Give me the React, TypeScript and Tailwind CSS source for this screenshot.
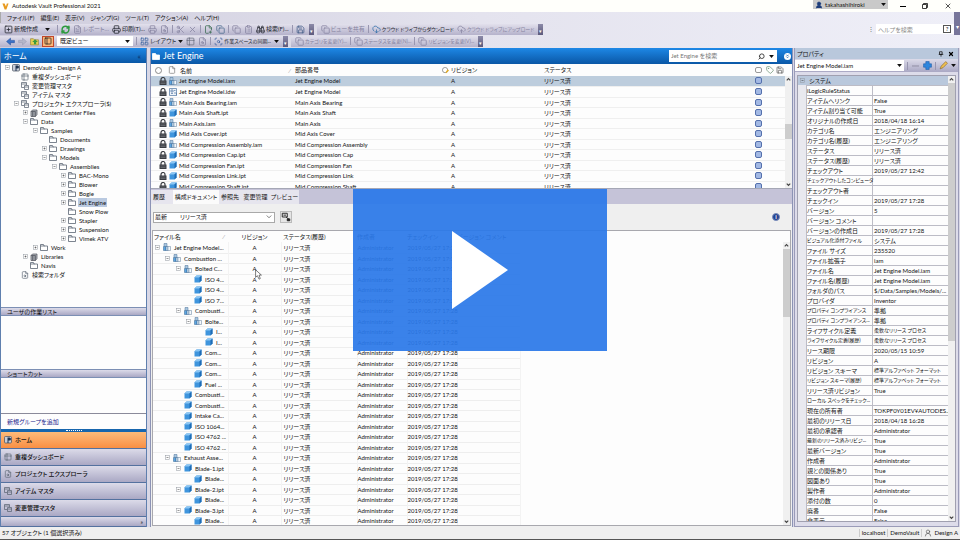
import { ReactNode } from "react";
import { RefreshCw, Printer, FilePlus2, Binoculars, PanelLeft, LayoutGrid, Copy, Scissors, X, CloudDownload, CloudUpload, File, FileText, ClipboardList, FileSearch, Table2, UserRound, ScanSearch, Search, Tag, SquarePlus, Save } from "lucide-react";

type Node = { label: string; depth: number; icon: string; open?: "+" | "-" };

const folders: Node[] = [
  { label: "DemoVault - Design A", depth: 0, icon: "vault", open: "-" },
  { label: "重複ダッシュボード", depth: 1, icon: "table" },
  { label: "変更管理マスタ", depth: 1, icon: "copy" },
  { label: "アイテム マスタ", depth: 1, icon: "copy" },
  { label: "プロジェクト エクスプローラ($)", depth: 1, icon: "copy", open: "-" },
  { label: "Content Center Files", depth: 2, icon: "lib", open: "+" },
  { label: "Data", depth: 2, icon: "folder", open: "-" },
  { label: "Samples", depth: 3, icon: "folder", open: "-" },
  { label: "Documents", depth: 4, icon: "folder" },
  { label: "Drawings", depth: 4, icon: "folder", open: "+" },
  { label: "Models", depth: 4, icon: "folder", open: "-" },
  { label: "Assemblies", depth: 5, icon: "folder", open: "-" },
  { label: "BAC-Mono", depth: 6, icon: "folder", open: "+" },
  { label: "Blower", depth: 6, icon: "folder", open: "+" },
  { label: "Bogie", depth: 6, icon: "folder", open: "+" },
  { label: "Jet Engine", depth: 6, icon: "folder", open: "+" },
  { label: "Snow Plow", depth: 6, icon: "folder" },
  { label: "Stapler", depth: 6, icon: "folder", open: "+" },
  { label: "Suspension", depth: 6, icon: "folder", open: "+" },
  { label: "Vimek ATV", depth: 6, icon: "folder", open: "+" },
  { label: "Work", depth: 3, icon: "folder", open: "+" },
  { label: "Libraries", depth: 2, icon: "lib", open: "+" },
  { label: "Navis", depth: 2, icon: "folder" },
  { label: "検索フォルダ", depth: 1, icon: "search" },
];

const files = [
  ["Jet Engine Model.iam", "Jet Engine Model"],
  ["Jet Engine Model.idw", "Jet Engine Model"],
  ["Main Axis Bearing.iam", "Main Axis Bearing"],
  ["Main Axis Shaft.ipt", "Main Axis Shaft"],
  ["Main Axis.iam", "Main Axis"],
  ["Mid Axis Cover.ipt", "Mid Axis Cover"],
  ["Mid Compression Assembly.iam", "Mid Compression Assembly"],
  ["Mid Compression Cap.ipt", "Mid Compression Cap"],
  ["Mid Compression Fan.ipt", "Mid Compression Fan"],
  ["Mid Compression Link.ipt", "Mid Compression Link"],
  ["Mid Compression Shaft.ipt", "Mid Compression Shaft"],
];

const parts: Node[] = [
  { label: "Jet Engine Model...", depth: 0, icon: "iam", open: "-" },
  { label: "Combustion ...", depth: 1, icon: "iam", open: "-" },
  { label: "Bolted C...", depth: 2, icon: "iam", open: "-" },
  { label: "ISO 4...", depth: 3, icon: "ipt" },
  { label: "ISO 4...", depth: 3, icon: "ipt" },
  { label: "ISO 7...", depth: 3, icon: "ipt" },
  { label: "Combusti...", depth: 2, icon: "iam", open: "-" },
  { label: "Bolte...", depth: 3, icon: "iam", open: "-" },
  { label: "I...", depth: 4, icon: "ipt" },
  { label: "I...", depth: 4, icon: "ipt" },
  { label: "Com...", depth: 3, icon: "ipt" },
  { label: "Com...", depth: 3, icon: "ipt" },
  { label: "Com...", depth: 3, icon: "ipt" },
  { label: "Fuel ...", depth: 3, icon: "ipt" },
  { label: "Combusti...", depth: 2, icon: "ipt" },
  { label: "Combusti...", depth: 2, icon: "ipt" },
  { label: "Intake Ca...", depth: 2, icon: "ipt" },
  { label: "ISO 1064...", depth: 2, icon: "ipt" },
  { label: "ISO 4762 ...", depth: 2, icon: "ipt" },
  { label: "ISO 4762 ...", depth: 2, icon: "ipt" },
  { label: "Exhaust Asse...", depth: 1, icon: "iam", open: "-" },
  { label: "Blade-1.ipt", depth: 2, icon: "ipt", open: "-" },
  { label: "Blade...", depth: 3, icon: "ipt" },
  { label: "Blade-2.ipt", depth: 2, icon: "ipt", open: "-" },
  { label: "Blade...", depth: 3, icon: "ipt" },
  { label: "Blade-3.ipt", depth: 2, icon: "ipt", open: "-" },
  { label: "Blade...", depth: 3, icon: "ipt" },
];

const properties = [
  ["iLogicRuleStatus", ""],
  ["アイテムへリンク", "False"],
  ["アイテム割り当て可能", "True"],
  ["オリジナルの作成日", "2018/04/18 16:14"],
  ["カテゴリ名", "エンジニアリング"],
  ["カテゴリ名(履歴)", "エンジニアリング"],
  ["ステータス", "リリース済"],
  ["ステータス(履歴)", "リリース済"],
  ["チェックアウト", "2019/05/27 12:42"],
  ["チェックアウトしたコンピュータ", ""],
  ["チェックアウト者", ""],
  ["チェックイン", "2019/05/27 17:28"],
  ["バージョン", "5"],
  ["バージョン コメント", ""],
  ["バージョンの作成日", "2019/05/27 17:28"],
  ["ビジュアル化添付ファイル", "システム"],
  ["ファイル サイズ", "235520"],
  ["ファイル拡張子", "iam"],
  ["ファイル名", "Jet Engine Model.iam"],
  ["ファイル名(履歴)", "Jet Engine Model.iam"],
  ["フォルダのパス", "$/Data/Samples/Models/..."],
  ["プロバイダ", "Inventor"],
  ["プロパティ コンプライアンス", "準拠"],
  ["プロパティ コンプライアンス...", "準拠"],
  ["ライフサイクル定義", "柔軟なリリース プロセス"],
  ["ライフサイクル定義(履歴)", "柔軟なリリース プロセス"],
  ["リース期限", "2020/05/15 10:59"],
  ["リビジョン", "A"],
  ["リビジョン スキーマ", "標準アルファベット フォーマット"],
  ["リビジョン スキーマ(履歴)", "標準アルファベット フォーマット"],
  ["リリース済リビジョン", "True"],
  ["ローカル スペックをチェック...", ""],
  ["現在の所有者", "TOKPF0Y01EV¥AUTODES..."],
  ["最初のリリース日", "2018/04/18 16:28"],
  ["最初の承認者", "Administrator"],
  ["最新のリリース済みリビジ...", "True"],
  ["最新バージョン", "True"],
  ["作成者", "Administrator"],
  ["親との関係あり", "True"],
  ["図面あり", "True"],
  ["製作者", "Administrator"],
  ["添付の数", "0"],
  ["廃番", "False"],
  ["非表示", "False"],
];

const folderPad = ["pl-[4px]", "pl-[13px]", "pl-[22px]", "pl-[32px]", "pl-[41px]", "pl-[51px]", "pl-[60px]"];
const partPad = ["pl-[2px]", "pl-[12px]", "pl-[23px]", "pl-[33px]", "pl-[44px]"];

const ui = "[font-family:Lato,'Noto_Sans_CJK_JP',sans-serif] [font-feature-settings:'palt']";

// long Japanese labels go one size down so they stay inside their column
const fit = (s: string) => (s.length >= 12 && s.charCodeAt(0) > 255 ? "text-[5px]" : "text-[6px]");

function FileIcon({ kind }: { kind: string }) {
  if (kind === "ipt")
    return (
      <svg viewBox="0 0 16 16" className="size-2 shrink-0">
        <path d="M1 5l4-4h10v10l-4 4H1z" fill="#3f95dd" />
        <path d="M1 5l4-4h10l-4 4z" fill="#8cc6f3" />
        <path d="M11 5l4-4v10l-4 4z" fill="#1f6cb5" />
      </svg>
    );
  if (kind === "idw")
    return (
      <svg viewBox="0 0 16 16" className="size-2 shrink-0" fill="none" stroke="#5b7fa8" strokeWidth="1.5">
        <path d="M1 1h14v14H1z" fill="#eef4fa" />
        <path d="M4 4h4v4H4zM10 5h3M4 11h4M10 10h5v5" />
      </svg>
    );
  return (
    <svg viewBox="0 0 16 16" className="size-2 shrink-0" strokeWidth="1">
      <path d="M1 7h5v8H1z" fill="#5ea6e2" stroke="#33608f" />
      <path d="M2 1h6v6H2z" fill="#a9c6df" stroke="#4a7098" />
      <path d="M6 7h4v8H6z" fill="#d9e8f5" stroke="#33608f" />
      <path d="M10 7h5v8h-5z" fill="#f4f8fc" stroke="#5f7c9b" />
    </svg>
  );
}

function LockIcon() {
  return (
    <svg viewBox="0 0 16 16" className="size-2 shrink-0">
      <path d="M4 8V5a4 4 0 018 0v3" fill="none" stroke="#3a3d42" strokeWidth="2.4" />
      <path d="M1 7h14v9H1z" fill="#3a3d42" />
      <path d="M3 10h10M3 13h10" stroke="#8d9197" />
    </svg>
  );
}

function FolderIcon({ cls }: { cls: string }) {
  return (
    <svg viewBox="0 0 16 14" className={`h-[7px] w-2 shrink-0 ${cls}`} stroke="currentColor" strokeWidth="1.6">
      <path d="M1 1h6l1 3h7v9H1z" />
      <path d="M1 4h8" />
    </svg>
  );
}

function TreeIcon({ kind }: { kind: string }) {
  const cls = "size-2 shrink-0 text-[#5c6674]";
  if (kind === "vault")
    return (
      <svg viewBox="0 0 16 16" className="size-2 shrink-0">
        <rect x="1" y="1" width="14" height="13" rx="2" fill="#c9ced8" stroke="#4d5563" strokeWidth="1.5" />
        <path d="M7 3h4a3 3 0 010 6H9v5H7z" fill="#1f3350" />
      </svg>
    );
  if (kind === "table") return <Table2 className={cls} />;
  if (kind === "copy")
    return (
      <svg viewBox="0 0 16 16" className={cls} fill="none" stroke="currentColor" strokeWidth="1.5">
        <path d="M6 11H1V1h10v5" />
        <path d="M1 4h10M7 7h8v8H7z" />
        <path d="M7 10h8" />
      </svg>
    );
  if (kind === "search") return <FileSearch className={cls} />;
  if (kind === "lib")
    return (
      <svg viewBox="0 0 16 16" className="size-2 shrink-0" fill="#b4b8bf" stroke="#4c4f57" strokeWidth="1.4">
        <path d="M2 5l3-3h9v9l-3 4" />
        <path d="M2 5h9v10H2z" />
        <path d="M5 5v10M8 5v10" />
      </svg>
    );
  return <FolderIcon cls="fill-white text-[#5c6674]" />;
}

function Toggle({ sign }: { sign?: "+" | "-" }) {
  return (
    <svg viewBox="0 0 10 10" className="size-[5px] shrink-0" stroke="#8f959e" fill="none">
      {sign && <rect x="1" y="1" width="8" height="8" />}
      {sign && <path d={sign === "+" ? "M3 5h4M5 3v4" : "M3 5h4"} stroke="#333" />}
    </svg>
  );
}

function Arrow({ cls = "" }: { cls?: string }) {
  return (
    <svg viewBox="0 0 8 5" className={`h-[3px] w-[5px] shrink-0 ${cls}`}>
      <path d="M0 0h8L4 5z" fill="#111" />
    </svg>
  );
}

function Bar({ children }: { children: ReactNode }) {
  return (
    <div className="flex h-[11px] items-center gap-[3px] bg-gradient-to-b from-[#e2e0ec] to-[#b5b2cb] pl-1">
      {children}
      <span className="ml-px h-full w-[5px] bg-gradient-to-b from-[#8c8aa8] to-[#5d5b7d] text-center text-[5px] leading-[14px] text-white">▾</span>
    </div>
  );
}

function Tool({ icon, label = "", off }: { icon?: ReactNode; label?: string; off?: boolean }) {
  return (
    <button className={`flex items-center gap-px whitespace-nowrap ${fit(label)} ${off ? "text-[#8583a0]" : "text-[#20242c]"}`}>
      {icon}
      {label}
    </button>
  );
}

const Sep = () => <span className="h-2 w-px bg-[#9896b0]" />;
const small = "size-[9px] shrink-0";

function Toolbars() {
  return (
    <div className="flex flex-col bg-gradient-to-r from-[#cfcddd] via-[#e4e3ee] to-[#efeff8] pb-px">
      <nav className="flex h-[11px] items-center gap-[6px] border-l border-[#aaa] pl-[6px]">
        {["ファイル(F)", "編集(E)", "表示(V)", "ジャンプ(G)", "ツール(T)", "アクション(A)", "ヘルプ(H)"].map((m) => (
          <button key={m}>{m}</button>
        ))}
        <span className="ml-auto h-full w-[6px] bg-[#77759a]" />
      </nav>
      <div className="flex h-3 items-center">
        <Bar>
          <Tool icon={<SquarePlus className={small} />} label="新規作成" />
          <Arrow cls="mx-1" />
          <Sep />
          <Tool icon={<RefreshCw className="size-[9px] text-[#2c9a3d]" strokeWidth={4} />} />
          <Tool off icon={<FileText className={small} />} label="レポート..." />
          <Tool icon={<Printer className={small} />} label="印刷(T)..." />
          <Tool off icon={<Printer className={small} />} />
          <Tool off icon={<FileSearch className={small} />} />
          <Sep />
          <Tool off icon={<Scissors className={small} />} />
          <Tool off icon={<X className={small} />} />
          <Sep />
          <Tool icon={<FilePlus2 className="size-[9px] text-[#356a4c]" />} />
          <Tool icon={<Copy className="size-[9px] text-[#4a6a8c]" />} />
          <Sep />
          <Tool off icon={<Copy className={small} />} />
          <Tool off icon={<ClipboardList className={small} />} />
          <Tool icon={<Binoculars className={small} />} label="検索(F)..." />
          <Sep />
          <Tool icon={<Save className="size-[9px] text-[#3f5a86]" />} />
        </Bar>
        <div className="ml-[3px]">
          <Bar>
            <Tool off icon={<Copy className={small} />} label="ビューを共有" />
            <Sep />
            <Tool icon={<CloudDownload className="size-[9px] text-[#2f6ea8]" />} label="クラウド ドライブからダウンロード" />
            <Tool off icon={<CloudUpload className={small} />} label="クラウド ドライブにアップロード" />
          </Bar>
        </div>
        <div className="ml-auto flex h-[11px] items-center">
          <span className="mr-[2px] text-[#666]">⋮</span>
          <input aria-label="ヘルプを検索" placeholder="ヘルプを検索" className="h-[10px] w-[64px] bg-white pl-[2px] placeholder:text-[#8b8b8b]" />
          <button className="flex h-[10px] w-[14px] items-center justify-center bg-white">
            <span className="border border-[#555] px-[2px] leading-[6px]">?</span>
          </button>
          <span className="h-3 w-[6px] bg-[#77759a] text-center text-white">▾</span>
        </div>
      </div>
      <div className="flex h-3 items-center">
        <Bar>
          <svg viewBox="0 0 16 16" className="ml-[2px] size-[9px]">
            <path d="M1 8l7-6v4h7v4H8v4z" fill="#3a72c8" stroke="#2450a0" />
          </svg>
          <svg viewBox="0 0 16 16" className="size-[9px]">
            <path d="M15 8L8 2v4H1v4h7v4z" fill="#b4b6c9" stroke="#9a9cb4" />
          </svg>
          <svg viewBox="0 0 16 14" className="size-[9px]">
            <path d="M1 2h5l2 2h7v9H1z" fill="#e8cf55" stroke="#8a7a28" />
            <path d="M7 12V8H4l5-5 5 5h-3v4z" fill="#3c9a3c" />
          </svg>
          <button aria-label="プレビュー" className="flex h-[11px] w-3 items-center justify-center border border-[#c2472a] bg-[#f9b779]">
            <PanelLeft className="size-2" />
          </button>
          <div className="flex h-[10px] items-center bg-white pr-[3px]">
            <select aria-label="ビュー" className="w-[68px] appearance-none bg-white pl-[3px]">
              <option>既定ビュー</option>
            </select>
            <Arrow />
          </div>
          <Sep />
          <Tool icon={<LayoutGrid className="size-[9px] text-[#3c66a0]" />} label="レイアウト" />
          <Arrow cls="-ml-px" />
          <Tool icon={<Table2 className="size-[9px] text-[#6b7080]" />} />
          <Tool off icon={<FileSearch className={small} />} />
          <Sep />
          <Tool icon={<ScanSearch className="size-[9px] text-[#4464a0]" />} label="作業スペースの同期..." />
          <Arrow />
        </Bar>
        <div className="ml-[3px]">
          <Bar>
            <Tool off icon={<Copy className={small} />} label="カテゴリを変更(Y)..." />
            <Sep />
            <Tool off icon={<Copy className={small} />} label="ステータスを変更(N)..." />
            <Sep />
            <Tool off icon={<Copy className={small} />} label="リビジョンを変更(V)..." />
          </Bar>
        </div>
      </div>
    </div>
  );
}

const blue = "bg-gradient-to-b from-[#1e88e6] to-[#0a57a6] text-white";
const lilac = "bg-gradient-to-b from-[#dcdbe9] to-[#aaa8c4]";

function Sidebar() {
  const tabs: [string, string][] = [
    ["ホーム", "vault"],
    ["重複ダッシュボード", "table"],
    ["プロジェクト エクスプローラ", "search"],
    ["アイテム マスタ", "copy"],
    ["変更管理マスタ", "copy"],
  ];
  return (
    <aside className="flex w-[147px] shrink-0 flex-col border-x border-[#5f7fae] bg-[#fdfdfd]">
      <header className={`flex h-[15px] shrink-0 items-center justify-between pr-[5px] pl-[3px] text-[8px] ${blue}`}>
        ホーム <span className="text-[#0b2f66]">«</span>
      </header>
      <ul className="grow">
        {folders.map((f) => (
          <li key={f.label} className={`flex h-[9px] items-center gap-[2px] ${folderPad[f.depth]}`}>
            <Toggle sign={f.open} />
            <TreeIcon kind={f.icon} />
            <span className={`px-px leading-[9px] ${f.label === "Jet Engine" ? "bg-[#b9c9e0]" : ""}`}>{f.label}</span>
          </li>
        ))}
      </ul>
      <h2 className={`flex h-[9px] items-center border-y border-[#7c8fb4] pl-[6px] ${lilac}`}>ユーザの作業リスト</h2>
      <div className="h-[53px]" />
      <h2 className={`flex h-[9px] items-center border-y border-[#7c8fb4] pl-[6px] ${lilac}`}>ショートカット</h2>
      <div className="h-[35px]" />
      <a href="#group" className="flex h-4 items-center border-t border-[#8a8a9a] pl-[6px] text-[#23238c]">新規グループを追加</a>
      <div className="flex h-[3px] justify-center bg-[#1766ad]">
        <span className="mt-px h-px w-4 border-t border-dotted border-white" />
      </div>
      {tabs.map(([label, icon], i) => (
        <button
          key={label}
          className={`flex h-[17px] w-full items-center gap-[3px] border-b border-[#54719f] pl-[3px] font-medium ${i === 0 ? "bg-gradient-to-b from-[#fdbb79] to-[#f98f43]" : lilac}`}
        >
          <TreeIcon kind={icon} />
          {label}
        </button>
      ))}
      <div className={`flex h-[10px] items-center justify-end border-b border-[#54719f] pr-[3px] ${lilac}`}>»</div>
    </aside>
  );
}

function Scroll({ className = "", thumb }: { className?: string; thumb: string }) {
  return (
    <div className={`flex w-[7px] shrink-0 flex-col items-center bg-[#f0f0f0] ${className}`}>
      <svg viewBox="0 0 8 8" className="size-[7px] shrink-0" fill="none" stroke="#444" strokeWidth="1.3">
        <path d="M2 5l2-2 2 2" />
      </svg>
      <div className="flex w-full grow flex-col">
        <div className={`w-full bg-[#cdcdcd] ${thumb}`} />
      </div>
      <svg viewBox="0 0 8 8" className="size-[7px] shrink-0" fill="none" stroke="#444" strokeWidth="1.3">
        <path d="M2 3l2 2 2-2" />
      </svg>
    </div>
  );
}

function FileList() {
  return (
    <section className="flex h-[141px] shrink-0 flex-col border-b border-[#a5a7b5] bg-[#fdfdfd]">
      <header className={`flex h-4 shrink-0 items-center pr-px pl-[1px] ${blue}`}>
        <FolderIcon cls="fill-white text-white" />
        <h1 className="ml-[3px] text-[9px]">Jet Engine</h1>
        <div className="ml-auto flex h-3 w-[108px] items-center bg-white pr-[3px]">
          <input aria-label="検索" placeholder="Jet Engine を検索" className="w-0 grow pl-[2px] placeholder:text-[#777]" />
          <Search className="mr-1 size-[7px] -scale-x-100 text-[#333]" strokeWidth={3} />
          <Arrow />
        </div>
        <button aria-label="展開" className="ml-[7px] flex size-[7px] items-center justify-center rounded-full bg-white text-[#0a57a6]">
          <svg viewBox="0 0 8 8" className="size-[5px]" fill="none" stroke="currentColor" strokeWidth="1.2">
            <path d="M2 1l2 2 2-2M2 4l2 2 2-2" />
          </svg>
        </button>
      </header>
      <div className="flex min-h-0 grow overflow-hidden">
        <div className="grow overflow-hidden">
          <table className="w-full table-fixed text-left">
            <colgroup>
              <col className="w-[143px]" />
              <col className="w-[148px]" />
              <col className="w-[101px]" />
              <col />
              <col className="w-[11px]" />
              <col className="w-[10px]" />
              <col className="w-[9px]" />
            </colgroup>
            <thead>
              <tr className="h-3">
                <th className="p-0 font-normal">
                  <div className="flex items-center pr-1 pl-[4px] leading-[11px]">
                    <span className="size-[7px] rounded-full border border-[#8a8a8a]" />
                    <File className="mr-[4px] ml-[6px] size-2 text-[#777]" />
                    名前
                    <span className="ml-auto text-[#888]">⁄</span>
                  </div>
                </th>
                <th className="p-0 pl-[1px] font-normal">部品番号</th>
                <th className="p-0 font-normal">
                  <div className="flex items-center gap-[2px]">
                    <svg viewBox="0 0 16 16" className="size-[7px]">
                      <circle cx="7" cy="7" r="6" fill="#fff" stroke="#777" strokeWidth="1.6" />
                      <path d="M8 12l5-7 3 3-6 6z" fill="#e0ac2c" />
                    </svg>
                    リビジョン
                  </div>
                </th>
                <th className="p-0 pl-[1px] font-normal">ステータス</th>
                <th className="p-0"><span className="block h-[6px] w-[7px] rounded-[2px] border border-[#999]" /></th>
                <th className="p-0"><Tag className="size-2 text-[#5f8a6a]" /></th>
                <th className="p-0"><Save className="size-2 text-[#555]" /></th>
              </tr>
            </thead>
            <tbody>
              {files.map(([name, part], i) => (
                <tr key={name} className={`border-b border-[#efefef] odd:h-[10px] even:h-[11px] ${i === 0 ? "bg-[#bdcddd]" : ""}`}>
                  <td className="p-0">
                    <div className="flex items-center gap-[2px] pl-[8px] leading-[9px]">
                      <LockIcon />
                      <FileIcon kind={name.slice(-3)} />
                      <span className="whitespace-nowrap">{name}</span>
                    </div>
                  </td>
                  <td className="p-0 pl-[1px] leading-[9px] whitespace-nowrap">{part}</td>
                  <td className="p-0 pl-[9px] leading-[9px]">A</td>
                  <td className="p-0 pl-[1px] leading-[9px]">リリース済</td>
                  <td className="p-0"><span className="block size-[7px] rounded-[2px] border border-[#5470ad] bg-[#a3b9e4]" /></td>
                  <td className="p-0" />
                  <td className="p-0" />
                </tr>
              ))}
            </tbody>
          </table>
        </div>
        <Scroll className="mt-3" thumb="mt-[41px] h-[15px]" />
      </div>
    </section>
  );
}

function Uses() {
  return (
    <section className="flex min-h-0 grow flex-col bg-[#efefef]">
      <div className="flex h-[15px] shrink-0 items-end bg-[#c5c3d8]">
        <div className="flex h-[14px] items-center bg-[#e6e5ee] whitespace-nowrap">
          <button className="w-[22px] pl-[2px] text-left">履歴</button>
          <button className="h-full w-[46px] bg-[#fbfbfb]">構成ドキュメント</button>
          <button className="w-[22px]">参照先</button>
          <button className="w-[29px]">変更管理</button>
          <button className="w-[29px]">プレビュー</button>
        </div>
      </div>
      <div className="flex h-[26px] shrink-0 items-center px-[2px]">
        <div className="flex h-[11px] items-center border border-[#a9a9a9] bg-white pr-[2px]">
          <label htmlFor="rev" className="w-[26px] pl-[1px]">最新</label>
          <select id="rev" className="w-[86px] appearance-none bg-white">
            <option>リリース済</option>
          </select>
          <svg viewBox="0 0 8 8" className="size-[6px]" fill="none" stroke="#555">
            <path d="M1 2l3 3 3-3" />
          </svg>
        </div>
        <button aria-label="参照" className="ml-[5px] flex size-3 items-center justify-center border border-[#bbb] bg-[#e5e5e5]">
          <svg viewBox="0 0 16 16" className="size-[10px]" fill="none" stroke="#222" strokeWidth="1.5">
            <path d="M2 2h8v6H2zM4 5h4M8 8l5 4" />
            <path d="M10 11h4v3h-4z" fill="#222" />
          </svg>
        </button>
        <span className="mr-[10px] ml-auto flex size-2 items-center justify-center rounded-full border border-[#7a8dbb] bg-[#22418f] font-bold text-white">i</span>
      </div>
      <div className="mr-px mb-px ml-[1px] flex min-h-0 grow border border-[#a8a8ae] bg-[#fdfdfd]">
        <div className="grow overflow-hidden">
          <table className="w-[368px] table-fixed text-left">
            <colgroup>
              <col className="w-[75px]" />
              <col className="w-[53px]" />
              <col className="w-[76px]" />
              <col className="w-[50px]" />
              <col className="w-[50px]" />
              <col />
            </colgroup>
            <thead>
              <tr className="h-[11px] *:p-0 *:font-normal *:whitespace-nowrap">
                <th>
                  <div className="flex justify-between pr-1 pl-[1px]">ファイル名 <span className="text-[#888]">⁄</span></div>
                </th>
                <th className="text-center">リビジョン</th>
                <th><span className="ml-[2px]">ステータス(履歴)</span></th>
                <th>作成者</th>
                <th>チェックイン</th>
                <th>バージョン コメント</th>
              </tr>
            </thead>
            <tbody>
              {parts.map((p, i) => (
                <tr key={i} className="border-b border-[#eeeeee] *:border-r *:border-[#f3f3f3] *:p-0 *:leading-[9px] *:whitespace-nowrap odd:h-[11px] even:h-[10px]">
                  <td>
                    <div className={`flex items-center gap-[3px] ${partPad[p.depth]}`}>
                      <Toggle sign={p.open} />
                      <FileIcon kind={p.icon} />
                      {p.label}
                    </div>
                  </td>
                  <td className="text-center">A</td>
                  <td><span className="ml-[2px]">リリース済</span></td>
                  <td>Administrator</td>
                  <td>2019/05/27 17:28</td>
                  <td />
                </tr>
              ))}
            </tbody>
          </table>
        </div>
        <Scroll className="mt-[11px]" thumb="h-[68px]" />
      </div>
    </section>
  );
}

function Properties() {
  return (
    <aside className="flex w-[165px] shrink-0 flex-col border-x border-b border-[#9a9bb8] bg-[#dddcea]">
      <header className="flex h-[11px] shrink-0 items-center bg-[#b9c8dc] pr-1 pl-[2px]">
        プロパティ
        <svg viewBox="0 0 16 16" className="mr-1 ml-auto size-[6px]" stroke="#111" strokeWidth="2" fill="none">
          <path d="M4 2h7v7H4zM2 9h12M8 9v6" />
        </svg>
        <X className="size-[6px] text-black" strokeWidth={5} />
      </header>
      <div className={`flex h-[13px] shrink-0 items-center gap-[3px] pr-[2px] ${lilac}`}>
        <div className="flex h-[11px] grow items-center justify-between bg-white pr-[2px] pl-[2px]">
          Jet Engine Model.iam <Arrow />
        </div>
        <Sep />
        <span className="mx-px h-[2px] w-[7px] bg-[#a9a7bd]" />
        <svg viewBox="0 0 16 16" className="size-[9px]">
          <path d="M5 1h6v4h4v6h-4v4H5v-4H1V5h4z" fill="#2f86dc" stroke="#1a5aa8" />
        </svg>
        <Sep />
        <svg viewBox="0 0 16 16" className="size-[9px]">
          <path d="M2 14l2-5 8-8 3 3-8 8z" fill="#f0c050" stroke="#7a5a20" />
        </svg>
        <Arrow />
      </div>
      <div className="mx-[2px] mt-[3px] mb-1 flex min-h-0 grow border border-[#a0a0b0] bg-[#fdfdfd]">
        <div className="grow overflow-hidden bg-[#e9e9ef]">
          <h2 className="flex h-[9px] items-center gap-1 bg-[#b9c8dc] pl-[2px]">
            <Toggle sign="-" /> システム
          </h2>
          <table className="ml-[8px] w-[144px] table-fixed bg-[#fdfdfd]">
            <tbody>
              {properties.map(([k, v]) => (
                <tr key={k} className="h-[10px] border border-[#bcbcc6] *:p-0 *:leading-[9px] *:whitespace-nowrap">
                  <th className={`w-[66px] border-r border-[#bcbcc6] text-left font-normal ${fit(k)}`}>{k}</th>
                  <td className={fit(v)}><span className="ml-px">{v}</span></td>
                </tr>
              ))}
            </tbody>
          </table>
        </div>
        <Scroll thumb="h-[258px]" />
      </div>
    </aside>
  );
}

export default function App() {
  return (
    <div className={`flex h-screen flex-col overflow-hidden bg-[#d9d8e6] text-[6px] leading-[8px] text-[#111] ${ui}`}>
      <div className="flex h-3 shrink-0 items-center bg-[#fffffb] pl-[2px]">
        <svg viewBox="0 0 16 16" className="size-[7px]">
          <path d="M1 1h5l3 7 2-7h4l-5 14H6z" fill="#e89a1c" />
        </svg>
        <span className="ml-[3px]">Autodesk Vault Professional 2021</span>
        <div className="ml-auto flex h-[9px] w-[75px] items-center self-start bg-[#c9c9c9] pl-[2px]">
          <UserRound className="size-2 text-[#1d3c7a]" fill="#1d3c7a" />
          <span className="ml-[2px]">takahashihiroki</span>
          <Arrow cls="mr-[2px] ml-auto" />
        </div>
        <div className="flex items-center gap-4 pr-2 pl-[12px]">
          <span className="h-px w-[6px] bg-black" />
          <svg viewBox="0 0 12 12" className="size-[6px]" fill="none" stroke="#000" strokeWidth="1.5">
            <path d="M1 3h8v8H1zM3 3V1h8v8H9" />
          </svg>
          <X className="size-2 text-black" />
        </div>
      </div>
      <Toolbars />
      <main className="flex min-h-0 grow">
        <Sidebar />
        <div className="ml-[3px] flex min-w-0 grow flex-col border-x border-[#8c93b5]">
          <FileList />
          <Uses />
        </div>
        <div className="ml-px flex pr-px">
          <Properties />
        </div>
      </main>
      <footer className="flex h-[13px] shrink-0 items-center border-b border-[#555] bg-[#efefef] px-[2px]">
        57 オブジェクト (1 個選択済み)
        <span className="ml-auto border-l border-[#ccc] px-[2px]">localhost</span>
        <span className="border-x border-[#ccc] px-[2px]">DemoVault</span>
        <UserRound className="mx-[2px] size-2 text-[#555]" />
        Design A
      </footer>

      <svg viewBox="0 0 12 18" className="absolute top-[269px] left-[255px] h-[11px] w-[7px]">
        <path d="M1 1v13l3-3 3 6 2-1-2-6h4z" fill="#fff" stroke="#222" />
      </svg>
      <button
        aria-label="再生"
        className="absolute top-1/2 left-1/2 flex h-[162px] w-[254px] -translate-x-1/2 -translate-y-1/2 items-center justify-center bg-[#2b78e8]/93"
      >
        <svg viewBox="0 0 56 78" className="h-[78px] w-[56px]">
          <path d="M0 0l56 39L0 78z" fill="#fff" />
        </svg>
      </button>
    </div>
  );
}
